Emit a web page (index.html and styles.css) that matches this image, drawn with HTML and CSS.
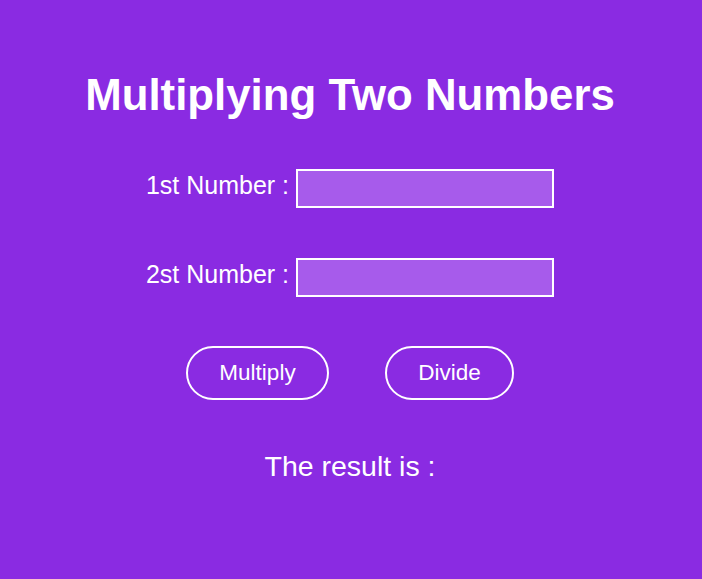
FILE: index.html
```html
<!DOCTYPE html>
<html lang="en">
<head>
<meta charset="utf-8">
<title>Multiplying Two Numbers</title>
<link rel="stylesheet" href="styles.css">
</head>
<body>
<main class="app">
  <h1 class="title">Multiplying Two Numbers</h1>
  <div class="field">
    <label class="field-label" for="n1">1st Number :</label>
    <input class="field-input" id="n1" type="text">
  </div>
  <div class="field field-second">
    <label class="field-label" for="n2">2st Number :</label>
    <input class="field-input" id="n2" type="text">
  </div>
  <div class="actions">
    <button class="btn btn-multiply" type="button">Multiply</button>
    <button class="btn btn-divide" type="button">Divide</button>
  </div>
  <p class="result">The result is :</p>
</main>
</body>
</html>
```
FILE: styles.css
```css
html, body {
  margin: 0;
  padding: 0;
  height: 100%;
  background: #8a2be2;
}

body {
  font-family: "Liberation Sans", Arial, sans-serif;
  color: #ffffff;
}

.app {
  display: flex;
  flex-direction: column;
  align-items: center;
  padding-top: 70px;
  padding-right: 2px;
}

.title {
  margin: 0;
  font-size: 43.8px;
  line-height: 50px;
  font-weight: bold;
}

.field {
  display: flex;
  align-items: baseline;
  gap: 7px;
  margin-top: 49px;
}

.field-second {
  margin-top: 50px;
}

.field-label {
  font-size: 25px;
}

.field-input {
  box-sizing: border-box;
  width: 258px;
  height: 39px;
  border: 2px solid #ffffff;
  background: #a75beb;
  color: #ffffff;
  font-family: "Liberation Sans", Arial, sans-serif;
  font-size: 16px;
  padding: 0 6px;
  outline: none;
}

.actions {
  display: flex;
  gap: 56px;
  margin-top: 49px;
}

.btn {
  box-sizing: border-box;
  height: 54px;
  padding: 0 30px;
  border: 2px solid #ffffff;
  border-radius: 27px;
  background: transparent;
  color: #ffffff;
  font-family: "Liberation Sans", Arial, sans-serif;
  font-size: 22.5px;
  cursor: pointer;
}

.btn-multiply {
  width: 143px;
}

.btn-divide {
  width: 129px;
}

.result {
  margin: 50px 0 0;
  font-size: 28.5px;
  line-height: 32px;
}
```
